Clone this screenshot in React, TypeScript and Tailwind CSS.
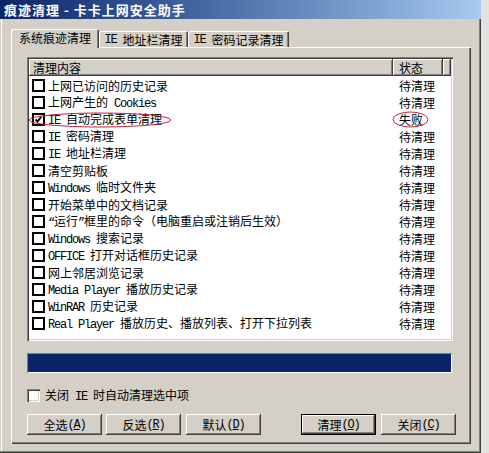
import React from 'react';

type Row = { label: string; status: string; checked?: boolean };

const ROWS: Row[] = [
  { label: '上网已访问的历史记录', status: '待清理' },
  { label: '上网产生的 Cookies', status: '待清理' },
  { label: 'IE 自动完成表单清理', status: '失败', checked: true },
  { label: 'IE 密码清理', status: '待清理' },
  { label: 'IE 地址栏清理', status: '待清理' },
  { label: '清空剪贴板', status: '待清理' },
  { label: 'Windows 临时文件夹', status: '待清理' },
  { label: '开始菜单中的文档记录', status: '待清理' },
  { label: '“运行”框里的命令（电脑重启或注销后生效）', status: '待清理' },
  { label: 'Windows 搜索记录', status: '待清理' },
  { label: 'OFFICE 打开对话框历史记录', status: '待清理' },
  { label: '网上邻居浏览记录', status: '待清理' },
  { label: 'Media Player 播放历史记录', status: '待清理' },
  { label: 'WinRAR 历史记录', status: '待清理' },
  { label: 'Real Player 播放历史、播放列表、打开下拉列表', status: '待清理' },
];

const raised =
  'shadow-[inset_-1px_-1px_#404040,inset_1px_1px_#ffffff,inset_-2px_-2px_#808080]';
const sunken =
  'shadow-[inset_1px_1px_#808080,inset_2px_2px_#404040,inset_-1px_-1px_#ffffff,inset_-2px_-2px_#d4d0c8]';

const LATIN = /[\x20-\x7e“”]/;

// SimSun-like mix: half-width latin runs, full-width CJK runs
function Mixed({ text }: { text: string }) {
  const parts = text.match(/[\x20-\x7e“”]+|[^\x20-\x7e“”]+/g) ?? [];
  return (
    <>
      {parts.map((p, i) =>
        LATIN.test(p[0]) ? (
          <span key={i} className="font-['Liberation_Mono',monospace] tracking-[-1.2px] whitespace-pre">
            {p}
          </span>
        ) : (
          <span key={i}>{p}</span>
        )
      )}
    </>
  );
}

function Tab({ label, active, width }: { label: string; active?: boolean; width: string }) {
  if (active) {
    return (
      <div
        className={`${width} h-[19px] -mb-px relative z-10 bg-[#d4d0c8] rounded-t-[2px] flex justify-center pt-[2px] shadow-[inset_1px_1px_#ffffff,inset_-1px_0_#404040,inset_-2px_0_#808080]`}
      >
        <Mixed text={label} />
      </div>
    );
  }
  return (
    <div
      className={`${width} h-[16px] bg-[#d4d0c8] rounded-t-[2px] flex justify-center pt-[2px] shadow-[inset_1px_1px_#ffffff,inset_-1px_0_#404040,inset_-2px_0_#808080]`}
    >
      <Mixed text={label} />
    </div>
  );
}

function ListCheck({ checked }: { checked?: boolean }) {
  return (
    <div className="w-[13px] h-[13px] border-2 border-black bg-white shrink-0">
      {checked && (
        <svg width="9" height="9" viewBox="0 0 9 9">
          <path d="M1.5 4.5 L3.5 6.5 L7.5 1.5" stroke="#000" strokeWidth="2" fill="none" />
        </svg>
      )}
    </div>
  );
}

function Button({ label, hot, def, className = '' }: { label: string; hot: string; def?: boolean; className?: string }) {
  const inner = (
    <div className={`w-full h-full flex items-center justify-center ${raised}`}>
      <span>{label}</span>
      <span className="font-['Liberation_Mono',monospace] tracking-[-1.2px]">
        (<span className="underline">{hot}</span>)
      </span>
    </div>
  );
  if (def) {
    return <div className={`w-[75px] h-[21px] border border-black bg-[#d4d0c8] ${className}`}>{inner}</div>;
  }
  return <div className={`w-[75px] h-[21px] bg-[#d4d0c8] ${className}`}>{inner}</div>;
}

export default function App() {
  return (
    <div className="relative w-[489px] h-[453px] overflow-hidden bg-[#e4e2de] text-black text-[12px] leading-[14px] font-['Noto_Sans_CJK_SC',sans-serif]">
      <div className="w-[481px] h-[453px] bg-[#d4d0c8] flex flex-col shadow-[inset_-1px_-1px_#404040,inset_-2px_-2px_#808080,inset_1px_0_#d4d0c8,inset_2px_0_#ffffff]">
        {/* Title bar */}
        <div className="h-[19px] bg-linear-to-r from-[#0a246a] to-[#a6caf0] flex items-center pl-[4px] pt-px">
          <span className="text-white font-bold text-[13px] leading-[16px] tracking-[1px] whitespace-pre">痕迹清理 - 卡卡上网安全助手</span>
        </div>

        {/* Tabs */}
        <div className="mt-[10px] ml-[11px] flex items-end h-[18px]">
          <Tab label="系统痕迹清理" active width="w-[88px]" />
          <Tab label="IE 地址栏清理" width="w-[89px]" />
          <Tab label="IE 密码记录清理" width="w-[101px]" />
        </div>

        {/* Tab panel */}
        <div className="ml-[11px] w-[460px] h-[397px] flex flex-col pl-[16px] pt-[10px] shadow-[inset_1px_1px_#ffffff,inset_-1px_-1px_#404040,inset_-2px_-2px_#808080]">
          {/* List view */}
          <div className={`w-[426px] h-[284px] bg-white p-[2px] flex flex-col ${sunken}`}>
            <div className="flex h-[17px] shrink-0 bg-[#d4d0c8]">
              <div className={`w-[364px] flex items-center pl-[4px] ${raised}`}>清理内容</div>
              <div className={`w-[50px] flex items-center pl-[6px] ${raised}`}>状态</div>
              <div className={`flex-1 ${raised}`} />
            </div>
            <div className="flex flex-col pt-px">
              {ROWS.map((r) => (
                <div key={r.label} className="flex h-[17px] items-center">
                  <div className="w-[364px] flex items-center pl-[3px] gap-[3px] whitespace-nowrap">
                    <ListCheck checked={r.checked} />
                    <span>
                      <Mixed text={r.label} />
                    </span>
                  </div>
                  <div className="pl-[6px]">{r.status}</div>
                </div>
              ))}
            </div>
          </div>

          {/* Progress bar */}
          <div className="mt-[12px] w-[425px] h-[20px] p-px shadow-[inset_1px_1px_#808080,inset_-1px_-1px_#ffffff]">
            <div className="w-full h-full bg-[#0a246a]" />
          </div>

          {/* Auto clean option */}
          <div className="mt-[16px] h-[13px] flex items-center gap-[5px]">
            <div className={`w-[13px] h-[13px] bg-white ${sunken}`} />
            <span>
              <Mixed text="关闭 IE 时自动清理选中项" />
            </span>
          </div>

          {/* Buttons */}
          <div className="mt-[12px] flex">
            <Button label="全选" hot="A" />
            <Button label="反选" hot="R" className="ml-[4px]" />
            <Button label="默认" hot="D" className="ml-[5px]" />
            <Button label="清理" hot="O" def className="ml-[40px]" />
            <Button label="关闭" hot="C" className="ml-[5px]" />
          </div>
        </div>
      </div>

      {/* red annotation circles */}
      <svg className="absolute left-0 top-0 pointer-events-none" width="489" height="453">
        <ellipse cx="100" cy="120" rx="71" ry="7" fill="none" stroke="#c8203c" strokeWidth="1" />
        <ellipse cx="410.5" cy="119.5" rx="17.5" ry="7.5" fill="none" stroke="#c8203c" strokeWidth="1" />
      </svg>
    </div>
  );
}
